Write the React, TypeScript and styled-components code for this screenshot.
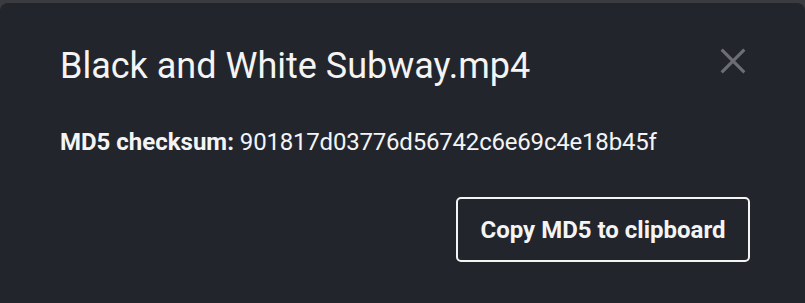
import styled, { createGlobalStyle } from "styled-components";

const GlobalStyle = createGlobalStyle`
    html, body {
        margin: 0;
        padding: 0;
        background-color: #3a3b40;
        font-family: Roboto, "Liberation Sans", sans-serif;
    }
`;

const Dialog = styled.div`
    margin-top: 3px;
    height: 300px;
    box-sizing: border-box;
    padding: 39px 55px 0 60px;
    background-color: #23252c;
    border-radius: 8px 8px 0 0;
    color: #f4f4f5;
`;

const Header = styled.div`
    display: flex;
    align-items: flex-start;
    justify-content: space-between;
`;

const Title = styled.h2`
    margin: 0;
    font-size: 36px;
    font-weight: 400;
    line-height: 48px;
`;

const CloseButton = styled.button`
    display: flex;
    margin: 2px 0 0;
    padding: 0;
    border: none;
    background: none;
    color: #6d6e73;
    cursor: pointer;
`;

const Checksum = styled.p`
    margin: 36px 0 0;
    font-size: 24px;
    line-height: 32px;
`;

const Label = styled.strong`
    font-weight: 700;
`;

const Hash = styled.span`
    letter-spacing: -0.2px;
`;

const Actions = styled.div`
    display: flex;
    justify-content: flex-end;
    margin-top: 39px;
`;

const CopyButton = styled.button`
    width: 294px;
    height: 65px;
    border: 2px solid #f4f4f5;
    border-radius: 5px;
    background: none;
    color: #f4f4f5;
    font-family: inherit;
    font-size: 24px;
    font-weight: 700;
    cursor: pointer;
`;

export default function App() {
    return (
        <>
            <GlobalStyle />
            <Dialog>
                <Header>
                    <Title>Black and White Subway.mp4</Title>
                    <CloseButton aria-label="Close">
                        <svg width="34" height="34" viewBox="0 0 24 24" fill="none" stroke="currentColor" strokeWidth="2.2">
                            <path d="M4 4l16 16M20 4L4 20" />
                        </svg>
                    </CloseButton>
                </Header>
                <Checksum>
                    <Label>MD5 checksum:</Label> <Hash>901817d03776d56742c6e69c4e18b45f</Hash>
                </Checksum>
                <Actions>
                    <CopyButton>Copy MD5 to clipboard</CopyButton>
                </Actions>
            </Dialog>
        </>
    );
}
